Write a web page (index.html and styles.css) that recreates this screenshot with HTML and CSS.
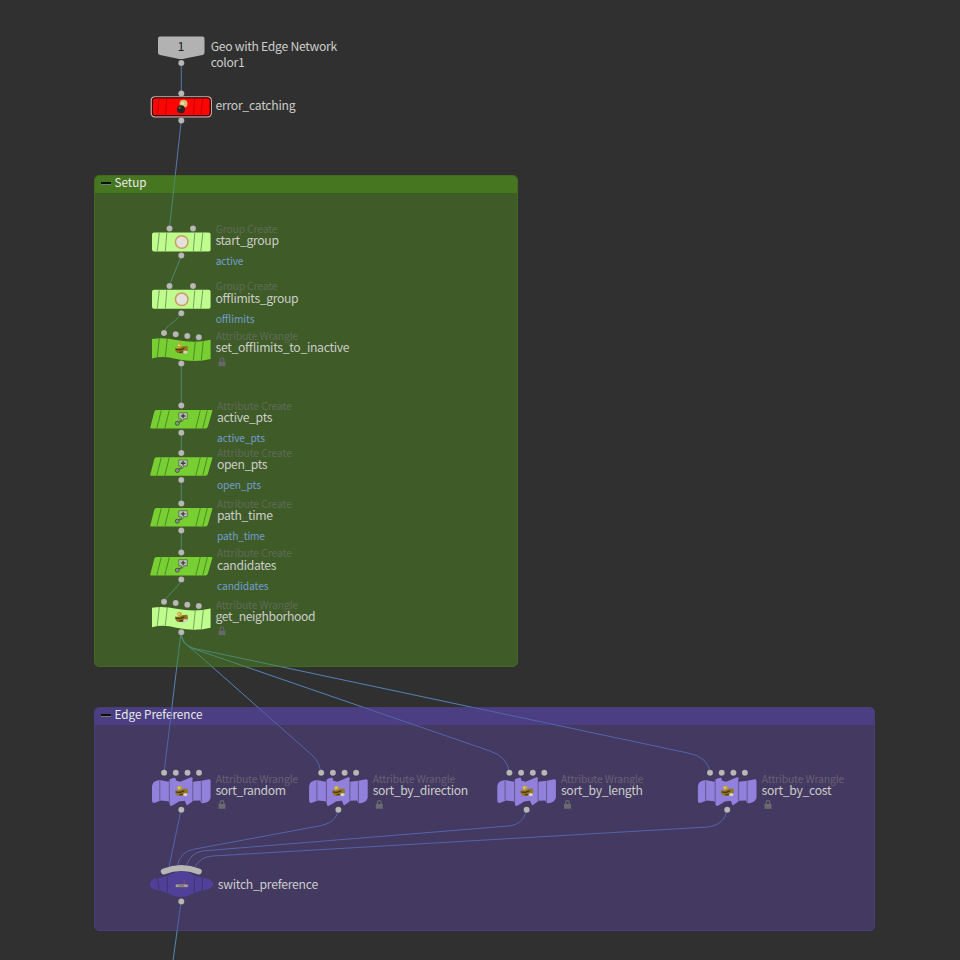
FILE: index.html
```html
<!DOCTYPE html>
<html lang="en">
<head>
<meta charset="utf-8">
<title>Network Editor</title>
<link rel="stylesheet" href="styles.css">
</head>
<body>
<main class="network">
  <section class="box box-setup"><header class="box-head"><i class="collapse"></i><span>Setup</span></header></section>
  <section class="box box-edge"><header class="box-head"><i class="collapse"></i><span>Edge Preference</span></header></section>
  <svg class="graph" viewBox="0 0 960 960">
    <defs>
      <linearGradient id="wire" gradientUnits="userSpaceOnUse" x1="0" y1="0" x2="0" y2="960">
        <stop offset="0.1823" stop-color="#557aa9"/><stop offset="0.1823" stop-color="#4a8870"/>
        <stop offset="0.6943" stop-color="#4a8870"/><stop offset="0.6943" stop-color="#5482b4"/>
        <stop offset="0.7365" stop-color="#5482b4"/><stop offset="0.7365" stop-color="#5363aa"/>
        <stop offset="0.9698" stop-color="#5363aa"/><stop offset="0.9698" stop-color="#5486ad"/>
      </linearGradient>
      <g id="slashes"><path d="M-14.5-9L-16 9M-22-9L-24 9M13.5-9L12 9M21.5-9L19.5 9"/></g>
      <g id="bar"><rect x="-29.300" y="-9.500" width="58.600" height="19" rx="2"/><use href="#slashes" class="mark"/></g>
      <g id="skew"><path d="M-25-9.300H30.300Q31.500-9.300 31-8L26.500 7.500Q26 9.300 24 9.300H-30Q-31.500 9.300-31 8L-27-7.500Q-26.500-9.300-25-9.300Z"/><path class="mark" d="M-20-9l-4.500 18M-12-9l-4.500 18M19-9l-4.500 18M26-9l-4.500 18"/></g>
      <g id="wave"><path d="M-29.300-9.500Q-18-11.500-5-8.500Q14-5 29.300-8.800V10.500Q14 14.500-5 10.500Q-18 7-29.300 10Z"/><path class="mark" d="M-22-10L-24 8.500M-14-10L-16 8.500M14-6.500L12 12M22-7L20 11.500"/></g>
      <g id="accordion"><path d="M-28-8.500Q-25-11-21.500-11L-13-9.300-11.800-11.500Q-9-13.500-6-13.300L-5-10.300-1-9.300 8-13Q11-14.500 11.500-12.500V-9.300L20-10.300 28-11.800Q29.300-11.800 29.300-10V7Q28 10.500 25.500 11.300Q22 12.500 20 12L18.500 9.500 12 9.800Q9 12.500 5.500 14.500L3.500 9.800-2.500 10.500Q-6 13-10 15Q-11.500 15-11.800 13L-13 10.300-20.500 9.500-27 12Q-29.300 12-29.300 10V-5Z"/><path class="mark" d="M-21.500-10.500V9.500M-12-11V13M11.500-12V9.800M20-10V11.500"/></g>
      <g id="ring"><circle r="6.300" fill="#e3e1dc" stroke="#cb9d61" stroke-width="1.500"/></g>
      <g id="wrangle"><path d="M-6-1Q-3 .5 0-1.500Q1-2.500 6-2.500Q7 0 6.500 2L2 5-4 4.500Q-7 2-6-1Z" fill="#94741c"/><path d="M-4.500-3.800Q-2-6.300.5-4.300V-1.800L-3-.8Z" fill="#cba52a"/><path d="M-5.500 1L-1 1.300 3-.3M-2 4L3 3" fill="none" stroke="#3d3516" stroke-width="1.200"/><circle cx="-2.300" cy="-3.300" r=".9" fill="#ddd9ad"/><ellipse cx="4" cy="3.600" rx="2.300" ry="1.700" fill="#d2d0ca"/></g>
      <g id="attrib"><path d="M-2.500-6.500H6V-.5H2.500L1 2 0-.5H-2.500Z" fill="#bfc6b8" stroke="#596056" stroke-width=".8"/><path d="M1.800-5.500V-1M-.5-3.300H4.200" stroke="#3b4438" stroke-width="1.400"/><path d="M-3.500 3L.5 1.500" stroke="#536052" stroke-width="1.500"/><circle cx="-4" cy="4" r="2" fill="#8c9489" stroke="#435040" stroke-width=".9"/></g>
      <g id="lock"><path d="M-1.800-1V-2.500A1.800 1.800 0 0 1 1.800-2.500V-1" fill="none" stroke="currentColor" stroke-width="1.200"/><rect x="-3.500" y="-1" width="7" height="4.800" rx=".4" fill="currentColor"/></g>
      <g id="dot"><circle r="3" /></g>
      <g id="wave-ports" class="dots"><circle cx="-17.300" cy="-15.500" r="3"/><circle cx="-5.600" cy="-14.300" r="3"/><circle cx="6" cy="-12.500" r="3"/><circle cx="17.500" cy="-11.300" r="3"/><circle cy="15" r="3"/></g>
      <g id="sort-node"><use href="#accordion" class="violet"/><use href="#wrangle"/><g class="dots"><circle cx="-17.200" cy="-18.200" r="3"/><circle cx="-5.500" cy="-18.200" r="3"/><circle cx="6.200" cy="-18.200" r="3"/><circle cx="17.700" cy="-18.200" r="3"/><circle cy="18.800" r="3"/></g></g>
    </defs>

    <g class="wires">
      <path d="M181.300 63V93M181.300 120L169.500 228M181.300 256L169.500 285M181.300 313Q180 317 172 323T164 333M181.300 364V405M181.300 433V453M181.300 480V503M181.300 531V552M181.300 580Q180 584 172 592T164 602"/>
      <path d="M181 632L164 773"/>
      <path d="M181 632C182 642 185 643 192 649L313 756Q320 763 320.500 772"/>
      <path d="M181 632C182 645 188 647 200 651L490 751Q508 757 509 772"/>
      <path d="M181 632C182 644 188 648 202 650L688 753Q708 757 710 772"/>
      <path d="M181 810L169 867"/>
      <path d="M338 810C337 819 330 824 319 826L195 849Q180 851 177 867"/>
      <path d="M526.500 810C524 820 519 825 508 826L202 851Q190 853 186 867"/>
      <path d="M727 810C725 820 720 825 708 827L212 856Q200 857 195 867"/>
      <path d="M181 902L173 961"/>
    </g>

    <path class="input" d="M160 36.500H202.500Q204.500 36.500 204.500 38.500V52.500Q204.500 54.500 202.500 55L185 58.500Q181 59.500 177 58.500L160 55Q158 54.500 158 52.500V38.500Q158 36.500 160 36.500Z"/>
    <text class="number" x="177.500" y="51">1</text>
    <g transform="translate(181.300 106.800)">
      <rect class="selected" x="-30" y="-10" width="60" height="20" rx="3.500"/>
      <rect class="error" x="-28.900" y="-8.900" width="57.800" height="17.800" rx="2.500"/>
      <use href="#slashes" class="mark error-mark"/>
      <circle cx="2.200" cy="-3" r="4" fill="#d9bc70"/><circle cx="1.500" cy="-3.500" r="1.500" fill="#eee1aa"/>
      <circle cx="-.3" cy="2.500" r="4" fill="#292525"/><circle cx="-1.700" cy="1" r="1" fill="#776d68"/>
    </g>

    <g transform="translate(181.300 242)"><use href="#bar" class="pale"/><use href="#ring" x=".4"/></g>
    <g transform="translate(181.300 299.300)"><use href="#bar" class="pale"/><use href="#ring" x=".4"/></g>
    <g transform="translate(181.300 348.500)"><use href="#wave" class="green"/><use href="#wrangle"/><use href="#wave-ports"/></g>
    <g transform="translate(181.300 419.300)"><use href="#skew" class="green"/><use href="#attrib"/></g>
    <g transform="translate(181.300 466.500)"><use href="#skew" class="green"/><use href="#attrib"/></g>
    <g transform="translate(181.300 517.200)"><use href="#skew" class="green"/><use href="#attrib"/></g>
    <g transform="translate(181.300 566.200)"><use href="#skew" class="green"/><use href="#attrib"/></g>
    <g transform="translate(181.300 617.200)"><use href="#wave" class="pale"/><use href="#wrangle"/><use href="#wave-ports"/></g>
    <use href="#sort-node" x="181.300" y="791"/>
    <use href="#sort-node" x="338.400" y="791"/>
    <use href="#sort-node" x="526.600" y="791"/>
    <use href="#sort-node" x="727.200" y="791"/>

    <g transform="translate(181.300 884.500)">
      <path class="switch" d="M-27-6Q-20-6-13-9Q0-17 13-9Q20-6 27-6Q32-3 32 0Q31 4 26 5Q19 6 12 9Q0 16-13 9Q-20 6-27 5Q-31.500 3-31.500 0Q-31-4-27-6Z"/>
      <path class="mark" d="M-24-6L-22 5M-14-8V8M13-8V8M21-6V6"/>
      <path class="switch-port" d="M-17.500-13Q0-20 17.500-13"/>
      <rect x="-6" y="-.5" width="13" height="3.500" rx="1.200" fill="#a5a2a4" stroke="#494161" stroke-width=".7"/><path d="M-3 1.300H3" stroke="#66606a"/><path d="M3-4V-.5" stroke="#8f4570"/>
    </g>

    <g class="dots">
      <use href="#dot" x="181.300" y="63"/><use href="#dot" x="181.300" y="93.500"/><use href="#dot" x="181.300" y="120.500"/>
      <use href="#dot" x="169.500" y="228.400"/><use href="#dot" x="193" y="228.400"/><use href="#dot" x="181.300" y="255.500"/>
      <use href="#dot" x="169.500" y="286"/><use href="#dot" x="193" y="286"/><use href="#dot" x="181.300" y="313.200"/>
      <use href="#dot" x="181.300" y="405.500"/><use href="#dot" x="181.300" y="432.800"/><use href="#dot" x="181.300" y="453"/><use href="#dot" x="181.300" y="480"/>
      <use href="#dot" x="181.300" y="503.500"/><use href="#dot" x="181.300" y="530.500"/><use href="#dot" x="181.300" y="552.500"/><use href="#dot" x="181.300" y="579.500"/>
      <use href="#dot" x="181.300" y="901.500"/>
    </g>

    <g class="type">
      <text x="215.700" y="232.700" textLength="61.800">Group Create</text>
      <text x="215.700" y="290.300" textLength="61.800">Group Create</text>
      <text x="215.700" y="339.700" textLength="82.500">Attribute Wrangle</text>
      <text x="217" y="409.500" textLength="75">Attribute Create</text>
      <text x="217" y="457.300" textLength="75">Attribute Create</text>
      <text x="217" y="507.700" textLength="75">Attribute Create</text>
      <text x="217" y="556.800" textLength="75">Attribute Create</text>
      <text x="215.700" y="608.500" textLength="82.500">Attribute Wrangle</text>
    </g>
    <g class="type type-violet">
      <text x="215.700" y="782.500" textLength="82.500">Attribute Wrangle</text>
      <text x="372.700" y="782.500" textLength="82.500">Attribute Wrangle</text>
      <text x="561" y="782.500" textLength="82.500">Attribute Wrangle</text>
      <text x="761.700" y="782.500" textLength="82.500">Attribute Wrangle</text>
    </g>
    <g class="name">
      <text x="210.700" y="51" textLength="126.500">Geo with Edge Network</text>
      <text x="210.700" y="67" textLength="34">color1</text>
      <text x="215.500" y="110" textLength="80">error_catching</text>
      <text x="215.500" y="245.300" textLength="63.500">start_group</text>
      <text x="215.500" y="303" textLength="83">offlimits_group</text>
      <text x="215.500" y="352.300" textLength="134">set_offlimits_to_inactive</text>
      <text x="217" y="422.300" textLength="55.500">active_pts</text>
      <text x="217" y="469.300" textLength="50.500">open_pts</text>
      <text x="217" y="520.300" textLength="56">path_time</text>
      <text x="217" y="570" textLength="59.500">candidates</text>
      <text x="215.500" y="621.300" textLength="100">get_neighborhood</text>
      <text x="215.500" y="795" textLength="70.500">sort_random</text>
      <text x="372.700" y="795" textLength="95.500">sort_by_direction</text>
      <text x="561" y="795" textLength="82">sort_by_length</text>
      <text x="761.500" y="795" textLength="70">sort_by_cost</text>
      <text x="217.700" y="889" textLength="100.500">switch_preference</text>
    </g>
    <g class="value">
      <text x="215.700" y="265.300" textLength="27.800">active</text>
      <text x="215.700" y="323" textLength="38.800">offlimits</text>
      <text x="217" y="442" textLength="48">active_pts</text>
      <text x="217" y="489" textLength="44">open_pts</text>
      <text x="217" y="540" textLength="48">path_time</text>
      <text x="217" y="589.500" textLength="51.500">candidates</text>
    </g>
    <g class="locks"><use href="#lock" x="222" y="362.500"/><use href="#lock" x="222" y="631.500"/></g>
    <g class="locks locks-violet"><use href="#lock" x="222" y="805"/><use href="#lock" x="379.300" y="805"/><use href="#lock" x="567.500" y="805"/><use href="#lock" x="768" y="805"/></g>
  </svg>
</main>
</body>
</html>
```
FILE: styles.css
```css
body { margin: 0; background: #303030; }
.network { position: relative; width: 960px; height: 960px; overflow: hidden; font-family: "Noto Sans CJK SC", "Noto Sans", sans-serif; }
.graph { position: absolute; inset: 0; width: 960px; height: 960px; }
.box { position: absolute; left: 94px; border-radius: 5px; box-sizing: border-box; overflow: hidden; }
.box-setup { top: 175px; width: 424px; height: 492px; background: #3f5b27; border: 1px solid #43691f; }
.box-edge { top: 707px; width: 781px; height: 224px; background: #433961; border: 1px solid #493d7a; }
.box-head { display: flex; align-items: flex-start; gap: 4px; height: 18px; padding-left: 5.500px; box-sizing: border-box; line-height: 11px; font-size: 11.700px; color: #e9ece6; }
.box-setup .box-head { background: #477620; border-bottom: 1px solid #3b5c20; }
.box-edge .box-head { height: 17px; background: #4c3e83; }
.collapse { width: 10px; height: 2px; margin-top: 6px; background: #0b0e09; border-bottom: 1px solid #777c75; }
.wires { fill: none; stroke: url(#wire); stroke-width: 1; }
.input { fill: #b2b2b2; }
.number { font-size: 12.500px; fill: #222; }
.error { fill: #fb0505; stroke: #170000; stroke-width: 1; }
.selected { fill: none; stroke: #d9a6a2; stroke-width: 1.300; }
.mark { fill: none; stroke: #202a20; stroke-opacity: .55; stroke-width: .8; }
.error-mark { stroke: #800; }
.pale { fill: #bdfc8d; }
.green { fill: #77cf32; }
.violet { fill: #9280dd; }
.violet .mark { stroke: #3b2f78; }
.switch { fill: #51409a; }
.switch-port { fill: none; stroke: #b9b6b8; stroke-width: 6; stroke-linecap: round; }
.dots { fill: #b9b8b7; stroke: #333; stroke-opacity: .2; stroke-width: .5; }
.name { font-size: 12.200px; fill: #cbcdca; }
.type { font-size: 10.400px; fill: #5f6a58; }
.type-violet { fill: #676271; }
.value { font-size: 10.200px; fill: #739ed0; }
.locks { color: #65676b; }
.locks-violet { color: #6a6b70; }
```
